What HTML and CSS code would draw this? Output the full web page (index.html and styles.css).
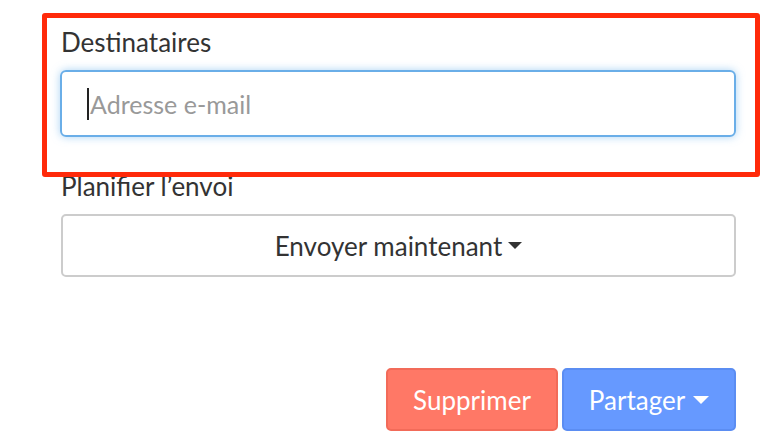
FILE: index.html
```html
<!DOCTYPE html>
<html lang="fr">
<head>
<meta charset="utf-8">
<link rel="stylesheet" href="styles.css">
</head>
<body>
<div class="page">
  <form class="form">
    <div class="group group-recipients">
      <label class="label">Destinataires</label>
      <div class="input"><span class="cursor"></span><span class="placeholder">Adresse e-mail</span></div>
    </div>
    <div class="group group-schedule">
      <label class="label">Planifier l’envoi</label>
      <div class="select"><span>Envoyer maintenant</span><span class="caret caret-dark"></span></div>
    </div>
    <div class="actions">
      <button type="button" class="btn btn-danger">Supprimer</button>
      <button type="button" class="btn btn-primary">Partager<span class="caret caret-light"></span></button>
    </div>
  </form>
  <div class="highlight"></div>
</div>
</body>
</html>
```

FILE: styles.css
```css
html, body {
  margin: 0;
  padding: 0;
  background: #ffffff;
}
.page {
  position: relative;
  width: 774px;
  height: 448px;
  overflow: hidden;
  font-family: Lato, "Open Sans", sans-serif;
  color: #333333;
}
.form {
  padding: 28px 38px 0 60px;
  display: flex;
  flex-direction: column;
}
.group {
  display: flex;
  flex-direction: column;
}
.label {
  font-size: 26px;
  line-height: 28px;
  padding-left: 1px;
  color: #333333;
}
.group-recipients .label {
  margin-bottom: 14px;
}
.input {
  height: 67px;
  box-sizing: border-box;
  border: 2px solid #6aaee8;
  border-radius: 6px;
  box-shadow: 0 0 9px rgba(102, 175, 233, 0.55);
  display: flex;
  align-items: center;
  padding-left: 25px;
  font-size: 25px;
}
.cursor {
  width: 2px;
  height: 32px;
  background: #222;
}
.placeholder {
  color: #999999;
  margin-left: 1px;
}
.group-schedule {
  margin-top: 35px;
}
.group-schedule .label {
  margin-bottom: 14px;
}
.select {
  height: 63px;
  box-sizing: border-box;
  margin-left: 1px;
  border: 2px solid #cccccc;
  border-radius: 5px;
  display: flex;
  align-items: center;
  justify-content: center;
  font-size: 26px;
  color: #333333;
}
.caret {
  display: inline-block;
  width: 0;
  height: 0;
  margin-left: 6px;
  border-left: 7px solid transparent;
  border-right: 7px solid transparent;
}
.caret-dark {
  border-top: 7px solid #333333;
}
.caret-light {
  border-left-width: 8px;
  border-right-width: 8px;
  border-top: 8px solid #ffffff;
  margin-left: 8px;
}
.actions {
  margin-top: 91px;
  display: flex;
  justify-content: flex-end;
  gap: 4px;
}
.btn {
  height: 63px;
  box-sizing: border-box;
  border-radius: 5px;
  font-family: Lato, "Open Sans", sans-serif;
  font-size: 26px;
  color: #ffffff;
  display: flex;
  align-items: center;
  justify-content: center;
  padding: 0;
}
.btn-danger {
  width: 172px;
  background: #ff7866;
  border: 2px solid #f26b59;
}
.btn-primary {
  width: 174px;
  background: #6699ff;
  border: 2px solid #5b8df2;
}
.highlight {
  position: absolute;
  left: 42px;
  top: 13px;
  width: 718px;
  height: 164px;
  box-sizing: border-box;
  border: 5px solid #ff2a0a;
  border-radius: 3px;
  pointer-events: none;
}
```
